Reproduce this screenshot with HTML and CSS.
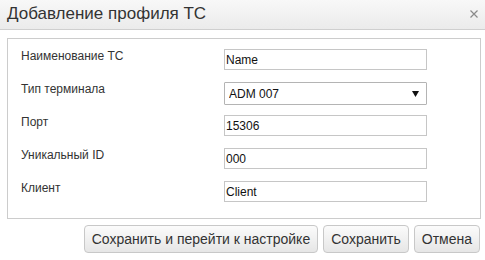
FILE: index.html
```html
<!DOCTYPE html>
<html lang="ru">
<head>
<meta charset="utf-8">
<title>Добавление профиля ТС</title>
<link rel="stylesheet" href="styles.css">
</head>
<body>
<div class="dialog">
  <div class="dialog-header">
    <span class="dialog-title">Добавление профиля ТС</span>
    <span class="dialog-close" aria-label="Закрыть">
      <svg width="8" height="8" viewBox="0 0 8 8"><path d="M0.5 0.5 L7.5 7.5 M7.5 0.5 L0.5 7.5" stroke="#8a8a8a" stroke-width="1.2" fill="none"/></svg>
    </span>
  </div>
  <div class="dialog-body">
    <div class="form-box">
      <label class="form-label" for="f-name">Наименование ТС</label>
      <input class="form-input" id="f-name" type="text" value="Name">

      <label class="form-label" for="f-type">Тип терминала</label>
      <div class="select-wrap">
        <select class="form-select" id="f-type"><option>ADM 007</option></select>
        <svg class="select-arrow" width="7" height="6" viewBox="0 0 7 6"><path d="M0 0 H7 L3.5 6 Z" fill="#111"/></svg>
      </div>

      <label class="form-label" for="f-port">Порт</label>
      <input class="form-input" id="f-port" type="text" value="15306">

      <label class="form-label" for="f-uid">Уникальный ID</label>
      <input class="form-input" id="f-uid" type="text" value="000">

      <label class="form-label" for="f-client">Клиент</label>
      <input class="form-input" id="f-client" type="text" value="Client">
    </div>
    <div class="dialog-buttons">
      <button class="btn" type="button">Сохранить и перейти к настройке</button>
      <button class="btn" type="button">Сохранить</button>
      <button class="btn" type="button">Отмена</button>
    </div>
  </div>
</div>
</body>
</html>
```

FILE: styles.css
```css
html, body {
  margin: 0;
  padding: 0;
  background: #ffffff;
}

body {
  font-family: "Liberation Sans", Arial, sans-serif;
  color: #333333;
  width: 485px;
  height: 260px;
  overflow: hidden;
}

.dialog {
  width: 485px;
}

.dialog-header {
  height: 30px;
  box-sizing: border-box;
  border-bottom: 1px solid #cfcfcf;
  background: linear-gradient(#f8f8f8, #ebebeb);
  display: flex;
  align-items: center;
  justify-content: space-between;
  padding: 0 7px 3px 7px;
}

.dialog-title {
  font-size: 17px;
  line-height: 19px;
  color: #333333;
}

.dialog-close {
  display: flex;
  width: 8px;
  height: 8px;
  margin-top: 2px;
}

.dialog-body {
  padding: 8px 4px 0 7px;
}

.form-box {
  border: 1px solid #cccccc;
  padding: 10px 0 16px 13px;
  display: grid;
  grid-template-columns: 203px 203px;
  grid-auto-rows: 21px;
  row-gap: 12px;
}

.form-label {
  font-size: 12px;
  line-height: 14px;
  color: #333333;
  align-self: start;
}

.form-input {
  box-sizing: border-box;
  width: 203px;
  height: 21px;
  margin: 0;
  border: 1px solid #c6c6c6;
  padding: 0 1px;
  font-family: "Liberation Sans", Arial, sans-serif;
  font-size: 12px;
  color: #111111;
  background: #ffffff;
  outline: none;
}

.select-wrap {
  position: relative;
  width: 203px;
  height: 23px;
}

.form-select {
  appearance: none;
  -webkit-appearance: none;
  box-sizing: border-box;
  width: 203px;
  height: 23px;
  margin: 0;
  border: 1px solid #b4b4b4;
  border-radius: 1px;
  padding: 0 4px;
  font-family: "Liberation Sans", Arial, sans-serif;
  font-size: 12px;
  color: #111111;
  background: #ffffff;
  outline: none;
}

.select-arrow {
  position: absolute;
  left: 188px;
  top: 9px;
  pointer-events: none;
}

.dialog-buttons {
  display: flex;
  justify-content: flex-end;
  gap: 5px;
  margin-top: 6px;
  padding-right: 1px;
}

.btn {
  box-sizing: border-box;
  height: 28px;
  margin: 0;
  padding: 0 7px;
  border: 1px solid #c8c8c8;
  border-radius: 4px;
  background: linear-gradient(#fbfbfb, #e6e6e6);
  font-family: "Liberation Sans", Arial, sans-serif;
  font-size: 14px;
  color: #333333;
  cursor: pointer;
}
```
